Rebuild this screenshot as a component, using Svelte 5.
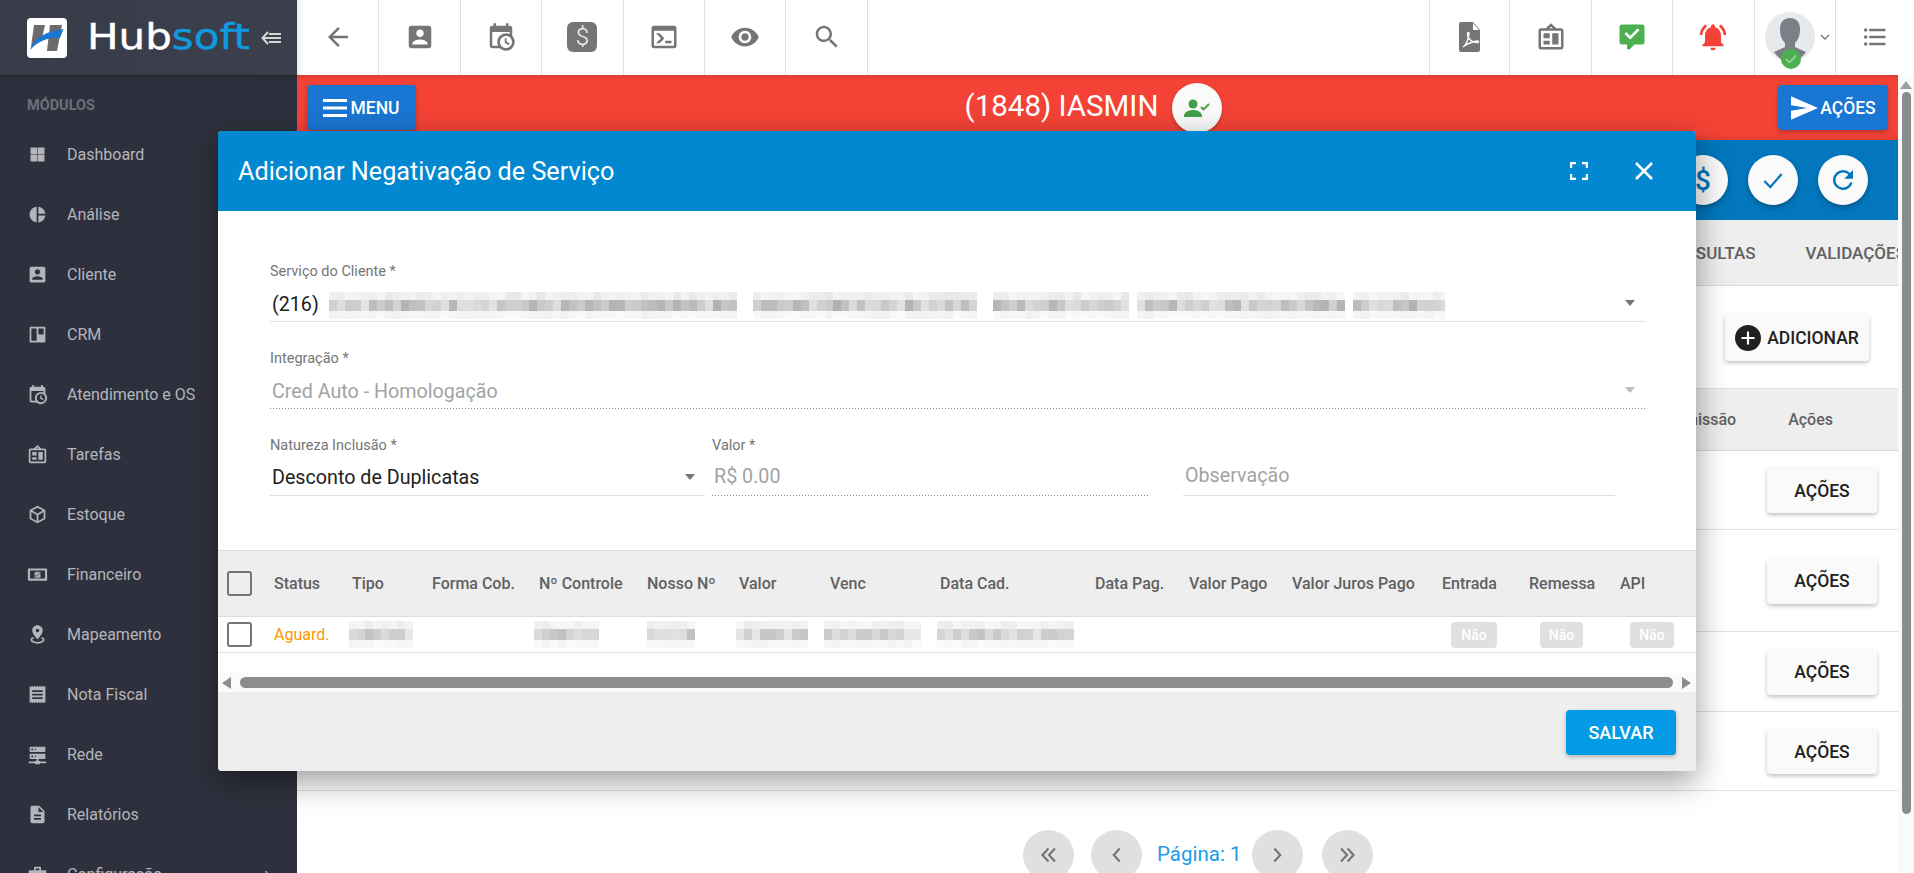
<script>
  const P = {
    account: 'M3 5v14c0 1.1.89 2 2 2h14c1.1 0 2-.9 2-2V5c0-1.1-.9-2-2-2H5c-1.11 0-2 .9-2 2zm12 4c0 1.66-1.34 3-3 3s-3-1.34-3-3 1.34-3 3-3 3 1.34 3 3zm-9 8c0-2 4-3.1 6-3.1s6 1.1 6 3.1v1H6v-1z',
    calendar: 'M15,13H16.5V15.82L18.94,17.23L18.19,18.53L15,16.69V13M19,8H5V19H9.67C9.24,18.09 9,17.07 9,16A7,7 0 0,1 16,9C17.07,9 18.09,9.24 19,9.67V8M5,21C3.89,21 3,20.1 3,19V5C3,3.89 3.89,3 5,3H6V1H8V3H16V1H18V3H19A2,2 0 0,1 21,5V11.1C22.24,12.36 23,14.09 23,16A7,7 0 0,1 16,23C14.09,23 12.36,22.24 11.1,21H5M16,11.15A4.85,4.85 0 0,0 11.15,16C11.15,18.68 13.32,20.85 16,20.85A4.85,4.85 0 0,0 20.85,16C20.85,13.32 18.68,11.15 16,11.15Z',
    console: 'M20,19V7H4V19H20M20,3A2,2 0 0,1 22,5V19A2,2 0 0,1 20,21H4A2,2 0 0,1 2,19V5C2,3.89 2.9,3 4,3H20M13,17V15H18V17H13M9.58,13L5.57,9H8.4L11.7,12.3C12.09,12.69 12.09,13.33 11.7,13.72L8.42,17H5.59L9.58,13Z',
    eye: 'M12 4.5C7 4.5 2.73 7.61 1 12c1.73 4.39 6 7.5 11 7.5s9.27-3.11 11-7.5c-1.73-4.39-6-7.5-11-7.5zM12 17c-2.76 0-5-2.24-5-5s2.24-5 5-5 5 2.24 5 5-2.24 5-5 5zm0-8c-1.66 0-3 1.34-3 3s1.34 3 3 3 3-1.34 3-3-1.34-3-3-3z',
    search: 'M15.5 14h-.79l-.28-.27C15.41 12.59 16 11.11 16 9.5 16 5.91 13.09 3 9.5 3S3 5.91 3 9.5 5.91 16 9.5 16c1.61 0 3.09-.59 4.23-1.57l.27.28v.79l5 4.99L20.49 19l-4.99-5zm-6 0C7.01 14 5 11.99 5 9.5S7.01 5 9.5 5 14 7.01 14 9.5 11.99 14 9.5 14z',
    back: 'M20 11H7.83l5.59-5.59L12 4l-8 8 8 8 1.41-1.41L7.83 13H20v-2z',
    task: 'M12 1l4.2 4H20a2 2 0 0 1 2 2v13a2 2 0 0 1-2 2H4a2 2 0 0 1-2-2V7a2 2 0 0 1 2-2h3.800zM12 3.700L10.600 5h2.800zM4 7v13h16V7zM6 9h5v4H6zM13 9h5v9h-5zM6 15h5v3H6z',
    comment: 'M9,22A1,1 0 0,1 8,21V18H4A2,2 0 0,1 2,16V4C2,2.89 2.9,2 4,2H20A2,2 0 0,1 22,4V16A2,2 0 0,1 20,18H13.9L10.2,21.71C10,21.9 9.75,22 9.5,22V22H9M10.500,14L18,6.500L16.590,5.080L10.500,11.170L7.410,8.090L6,9.500L10.500,14Z',
    bell: 'M7.58 4.08L6.15 2.65C3.75 4.48 2.17 7.3 2.03 10.5h2c.15-2.65 1.51-4.97 3.55-6.42zm12.39 6.42h2c-.15-3.2-1.73-6.02-4.12-7.85l-1.42 1.43c2.02 1.45 3.39 3.77 3.54 6.42zM18 11c0-3.07-1.64-5.64-4.5-6.32V4c0-.83-.67-1.5-1.5-1.5s-1.5.67-1.5 1.5v.68C7.63 5.36 6 7.92 6 11v5l-2 2v1h16v-1l-2-2v-5zm-6 11c.14 0 .27-.01.4-.04.65-.14 1.18-.58 1.44-1.18.1-.24.15-.5.15-.78h-4c.01 1.1.9 2 2.01 2z',
    list: 'M7,5H21V7H7V5M7,13V11H21V13H7M4,4.5A1.5,1.5 0 0,1 5.5,6A1.5,1.5 0 0,1 4,7.5A1.5,1.5 0 0,1 2.5,6A1.5,1.5 0 0,1 4,4.500M4,10.5A1.5,1.5 0 0,1 5.5,12A1.5,1.5 0 0,1 4,13.5A1.5,1.5 0 0,1 2.5,12A1.5,1.5 0 0,1 4,10.500M7,19V17H21V19H7M4,16.5A1.5,1.5 0 0,1 5.5,18A1.5,1.5 0 0,1 4,19.5A1.5,1.5 0 0,1 2.5,18A1.5,1.5 0 0,1 4,16.500Z',
    grid: 'M4 4h7.700v7.700H4zM12.300 4H20v7.700h-7.700zM4 12.300h7.700V20H4zM12.300 12.300H20V20h-7.700z',
    pie: 'M11 3v18c-4.500-.5-8-4.300-8-9s3.500-8.500 8-9zm2 0v8h8c-.47-4.200-3.800-7.530-8-8zm0 10v8c4.200-.47 7.530-3.800 8-8z',
    trello: 'M4,3H20A1,1 0 0,1 21,4V20A1,1 0 0,1 20,21H4A1,1 0 0,1 3,20V4A1,1 0 0,1 4,3M5.5,5A0.5,0.5 0 0,0 5,5.5V18.500A0.5,0.5 0 0,0 5.5,19H10.5A0.5,0.5 0 0,0 11,18.500V5.5A0.5,0.5 0 0,0 10.5,5H5.5M13.5,5A0.5,0.5 0 0,0 13,5.5V11.5A0.5,0.5 0 0,0 13.5,12H18.5A0.5,0.5 0 0,0 19,11.5V5.5A0.5,0.5 0 0,0 18.5,5H13.5Z',
    cube: 'M21,16.5C21,16.88 20.79,17.21 20.47,17.38L12.57,21.82C12.41,21.94 12.21,22 12,22C11.79,22 11.59,21.94 11.43,21.82L3.53,17.38C3.21,17.21 3,16.88 3,16.5V7.5C3,7.12 3.21,6.79 3.53,6.62L11.43,2.18C11.59,2.06 11.79,2 12,2C12.21,2 12.41,2.06 12.57,2.18L20.47,6.62C20.79,6.79 21,7.12 21,7.5V16.5M12,4.15L6.04,7.5L12,10.85L17.96,7.5L12,4.15M5,15.91L11,19.29V12.58L5,9.21V15.91M19,15.91V9.21L13,12.58V19.29L19,15.91Z',
    money: 'M2 5h20a1 1 0 0 1 1 1v12a1 1 0 0 1-1 1H2a1 1 0 0 1-1-1V6a1 1 0 0 1 1-1zM3.500 7.500v9h17v-9zM11 8.500h2v1h2.500v1.500H11.500v.75H14.500a1 1 0 0 1 1 1v1.750a1 1 0 0 1-1 1H13v.5h-2v-.5H8.500V14H13v-.75H9.500a1 1 0 0 1-1-1v-1.750a1 1 0 0 1 1-1H11z',
    pin: 'M18 7.500c0-3.310-2.690-6-6-6S6 4.190 6 7.500c0 4.500 6 10 6 10s6-5.500 6-10zm-8 0c0-1.100.9-2 2-2s2 .9 2 2-.89 2-2 2c-1.100 0-2-.9-2-2zM7 14.800C4.900 15.500 4 16.600 4 18c0 2.700 3.800 4.500 8 4.500s8-1.800 8-4.500c0-1.400-.9-2.500-3-3.200l-1.100 1.500c1.300.4 2.100 1 2.100 1.700 0 1.200-2.800 2.500-6 2.500s-6-1.300-6-2.500c0-.7.8-1.300 2.100-1.700z',
    receipt: 'M18 17H6v-2h12v2zm0-4H6v-2h12v2zm0-4H6V7h12v2zM3 22l1.500-1.500L6 22l1.500-1.500L9 22l1.500-1.500L12 22l1.500-1.500L15 22l1.500-1.500L18 22l1.500-1.500L21 22V2l-1.500 1.500L18 2l-1.500 1.500L15 2l-1.500 1.500L12 2l-1.500 1.500L9 2 7.500 3.500 6 2 4.500 3.500 3 2v20z',
    server: 'M13,19H14A1,1 0 0,1 15,20H22V22H15A1,1 0 0,1 14,23H10A1,1 0 0,1 9,22H2V20H9A1,1 0 0,1 10,19H11V17H4A1,1 0 0,1 3,16V12A1,1 0 0,1 4,11H20A1,1 0 0,1 21,12V16A1,1 0 0,1 20,17H13V19M4,3H20A1,1 0 0,1 21,4V8A1,1 0 0,1 20,9H4A1,1 0 0,1 3,8V4A1,1 0 0,1 4,3M9,7H10V5H9V7M9,15H10V13H9V15M5,5V7H7V5H5M5,13V15H7V13H5Z',
    doc: 'M14 2H6c-1.100 0-1.990.9-1.990 2L4 20c0 1.100.89 2 1.990 2H18c1.100 0 2-.9 2-2V8l-6-6zm2 16H8v-2h8v2zm0-4H8v-2h8v2zm-3-5V3.500L18.500 9H13z',
    tool: 'M9 3h6a1 1 0 0 1 1 1v3h5a1 1 0 0 1 1 1v11a1 1 0 0 1-1 1H3a1 1 0 0 1-1-1V8a1 1 0 0 1 1-1h5V4a1 1 0 0 1 1-1zm1 2v2h4V5z'
  };

  const topLeft = [
    { d: P.back, w: 30 }, { d: P.account, w: 30 }, { d: P.calendar, w: 30 },
    { dollar: true }, { d: P.console, w: 30 }, { d: P.eye, w: 30 }, { d: P.search, w: 30 }
  ];

  const nav = [
    ['Dashboard', P.grid], ['Análise', P.pie], ['Cliente', P.account], ['CRM', P.trello],
    ['Atendimento e OS', P.calendar], ['Tarefas', P.task], ['Estoque', P.cube], ['Financeiro', P.money],
    ['Mapeamento', P.pin], ['Nota Fiscal', P.receipt], ['Rede', P.server], ['Relatórios', P.doc], ['Configuração', P.tool]
  ];

  const heads = ['Status', 'Tipo', 'Forma Cob.', 'Nº Controle', 'Nosso Nº', 'Valor', 'Venc', 'Data Cad.', 'Data Pag.', 'Valor Pago', 'Valor Juros Pago', 'Entrada', 'Remessa', 'API'];

  function blur(width, seed, gaps = [], strength = 1) {
    const cell = 8;
    const rows = [[0, 8, 0.3], [8, 11, 1], [19, 8, 0.18]];
    const out = [];
    let s = seed;
    const rnd = () => { s = (s * 9301 + 49297) % 233280; return s / 233280; };
    for (const [y, h, k] of rows) {
      for (let x = 0; x < width; x += cell) {
        if (gaps.some(([a, b]) => x >= a && x < b)) continue;
        const v = Math.round(255 - (28 + rnd() * 50) * k * strength);
        out.push({ x, y, h, fill: `rgb(${v},${v},${v})` });
      }
    }
    return out;
  }

  const bandGaps = [[408, 424], [648, 664], [800, 808], [1016, 1024]];
  const band = blur(1116, 7, bandGaps);

  const cells = [
    { w: 64, off: -3, seed: 3 }, null,
    { w: 65, off: -5, seed: 11 }, { w: 48, off: 0, seed: 19 }, { w: 72, off: -3, seed: 23 },
    { w: 97, off: -6, seed: 31 }, { w: 137, off: -3, seed: 41 }
  ];

  const rowsBg = ['r1', 'r2', 'r3', 'r4'];
</script>

<div class="app">
  <aside class="sidebar">
    <div class="brand">
      <svg class="logo" viewBox="0 0 40 40" width="40" height="40">
        <rect width="40" height="40" rx="4" fill="#fff" />
        <path d="M7 7h11l-3 13-11 9z" fill="#6b6b6b" />
        <path d="M23 7h12l-5 26H20z" fill="#6b6b6b" />
        <path d="M3 32C8 18 22 13 36.500 11L33 20C24 19 12 22 3 32z" fill="#1976d2" />
      </svg>
      <span class="wordmark">Hub<span>soft</span></span>
      <svg class="collapse" viewBox="0 0 20 14" width="20" height="14" fill="none" stroke="#d6d6d6" stroke-width="2">
        <path d="M7 1L1.500 7 7 13M3 7h17M8 3h12M8 11h12" />
      </svg>
    </div>
    <div class="section">MÓDULOS</div>
    <nav>
      {#each nav as [label, d], i}
        <div class="nav-item">
          <svg viewBox="0 0 24 24" width="21" height="21"><path {d} fill-rule="evenodd" /></svg>
          <span>{label}</span>
          {#if i === nav.length - 1}<em class="chev">›</em>{/if}
        </div>
      {/each}
    </nav>
  </aside>

  <main class="main">
    <header class="topbar">
      {#each topLeft as it}
        <div class="tcell">
          {#if it.dollar}
            <div class="dollar">$</div>
          {:else}
            <svg viewBox="0 0 24 24" width={it.w} height={it.w}><path d={it.d} /></svg>
          {/if}
        </div>
      {/each}
      <div class="spacer"></div>
      <div class="tcell first">
        <svg viewBox="0 0 24 30" width="24" height="30">
          <path d="M3 0h12l7 8v20a2 2 0 0 1-2 2H3a2 2 0 0 1-2-2V2a2 2 0 0 1 2-2z" fill="#757575" />
          <path d="M15 1v7h6z" fill="#fff" />
          <path d="M5 25c3-2 5-7 6-13 .3-2-1.500-2-1.500 0 0 5 5 9 10 8.500 2-.3 1-2-1-1.500-4 .8-9 2.500-13.500 6z" fill="none" stroke="#fff" stroke-width="1.400" />
        </svg>
      </div>
      <div class="tcell">
        <svg viewBox="0 0 24 24" width="30" height="30"><path d={P.task} fill-rule="evenodd" /></svg>
      </div>
      <div class="tcell">
        <svg viewBox="0 0 24 24" width="30" height="30"><path d={P.comment} fill="#4caf50" /></svg>
      </div>
      <div class="tcell">
        <svg viewBox="0 0 24 24" width="32" height="32"><path d={P.bell} fill="#f44336" /></svg>
      </div>
      <div class="tcell user">
        <div class="avatar">
          <svg viewBox="0 0 50 50" width="50" height="50">
            <circle cx="25" cy="25" r="25" fill="#e8e9ed" />
            <path d="M25 6c7 0 10 5 10 11 0 7-2 11-5 14v4l11 5c-4 6-10 10-16 10S13 46 9 40l11-5v-4c-3-3-5-7-5-14 0-6 3-11 10-11z" fill="#7b7f87" />
          </svg>
          <span class="badge">
            <svg viewBox="0 0 20 20" width="20" height="20"><path d="M5 10l3.500 3.500L15 6.500" fill="none" stroke="#a5d6a7" stroke-width="1.500" /></svg>
          </span>
        </div>
        <svg class="down" viewBox="0 0 10 6" width="10" height="6"><path d="M1 1l4 4 4-4" fill="none" stroke="#757575" stroke-width="1.300" /></svg>
      </div>
      <div class="tcell last">
        <svg viewBox="0 0 24 24" width="28" height="28"><path d={P.list} /></svg>
      </div>
    </header>

    <div class="page">
      <div class="content">
        <div class="redbar">
          <button class="bluebtn menu">
            <svg viewBox="0 0 24 18" width="24" height="18"><path d="M0 0h24v3H0zM0 7.500h24v3H0zM0 15h24v3H0z" fill="#fff" /></svg>
            MENU
          </button>
          <div class="title">
            <span>(1848) IASMIN</span>
            <div class="title-ico">
              <svg viewBox="0 0 28 24" width="28" height="24">
                <circle cx="10" cy="8" r="4.500" fill="#43a047" />
                <path d="M1 20c0-4 5-6 9-6s9 2 9 6v1H1z" fill="#43a047" />
                <path d="M18 11l2.500 2.500L26 8" fill="none" stroke="#43a047" stroke-width="1.800" />
              </svg>
            </div>
          </div>
          <button class="bluebtn actions">
            <svg viewBox="0 0 26 26" width="28" height="28"><path d="M1 2l25 11L1 24v-8.500L16 13 1 10.500z" fill="#fff" /></svg>
            AÇÕES
          </button>
        </div>

        <div class="bluebar">
          <div class="round">
            <span class="rdollar">$</span>
          </div>
          <div class="round">
            <svg viewBox="0 0 24 24" width="26" height="26"><path d="M4 13l5.500 5.500L20 6.500" fill="none" stroke="#0277bd" stroke-width="2" /></svg>
          </div>
          <div class="round">
            <svg viewBox="0 0 24 24" width="30" height="30"><path d="M17.650 6.350A7.960 7.960 0 0 0 12 4a8 8 0 1 0 7.730 10h-2.080A6 6 0 1 1 12 6c1.660 0 3.140.69 4.220 1.780L13 11h7V4z" fill="#0277bd" /></svg>
          </div>
        </div>

        <div class="tabs">
          <span>CONSULTAS</span>
          <span>VALIDAÇÕES</span>
        </div>

        <div class="toolbar">
          <button class="add">
            <svg viewBox="0 0 24 24" width="26" height="26"><circle cx="12" cy="12" r="12" fill="#212121" /><path d="M11 6h2v5h5v2h-5v5h-2v-5H6v-2h5z" fill="#fff" /></svg>
            ADICIONAR
          </button>
        </div>

        <div class="bg-head">
          <span class="h-emissao">Emissão</span>
          <span class="h-acoes">Ações</span>
        </div>
        {#each rowsBg as r}
          <div class="bg-row {r}"><button class="light">AÇÕES</button></div>
        {/each}

        <div class="pager">
          <div class="pbtn">
            <svg viewBox="0 0 24 24" width="26" height="26"><path d="M11.500 6L6 12l5.500 6M17.500 6L12 12l5.500 6" fill="none" stroke="#757575" stroke-width="2" /></svg>
          </div>
          <div class="pbtn">
            <svg viewBox="0 0 24 24" width="26" height="26"><path d="M14.500 6L9 12l5.500 6" fill="none" stroke="#757575" stroke-width="2" /></svg>
          </div>
          <span class="plabel">Página: 1</span>
          <div class="pbtn">
            <svg viewBox="0 0 24 24" width="26" height="26"><path d="M9.500 6L15 12l-5.500 6" fill="none" stroke="#757575" stroke-width="2" /></svg>
          </div>
          <div class="pbtn last-p">
            <svg viewBox="0 0 24 24" width="26" height="26"><path d="M6.500 6L12 12l-5.500 6M12.500 6L18 12l-5.500 6" fill="none" stroke="#757575" stroke-width="2" /></svg>
          </div>
        </div>
      </div>
      <div class="vscroll">
        <svg viewBox="0 0 12 8" width="12" height="8"><path d="M6 0l6 8H0z" fill="#9e9e9e" /></svg>
        <div class="vthumb"></div>
      </div>
    </div>
  </main>

  <section class="modal">
    <div class="m-head">
      <h2>Adicionar Negativação de Serviço</h2>
      <svg class="m-full" viewBox="0 0 18 18" width="18" height="18"><path d="M1 6V1h5M12 1h5v5M17 12v5h-5M6 17H1v-5" fill="none" stroke="#fff" stroke-width="2.400" /></svg>
      <svg class="m-close" viewBox="0 0 18 18" width="18" height="18"><path d="M1 1l16 16M17 1L1 17" fill="none" stroke="#fff" stroke-width="2.500" /></svg>
    </div>

    <div class="m-form">
      <div class="field">
        <div class="lab">Serviço do Cliente *</div>
        <div class="ctl solid v1">
          <span class="val dark">(216)</span>
          <svg class="band" width="1116" height="27" shape-rendering="crispEdges">
            {#each band as c}<rect x={c.x} y={c.y} width="8" height={c.h} fill={c.fill} />{/each}
          </svg>
          <i class="arrow"></i>
        </div>
      </div>
      <div class="field">
        <div class="lab">Integração *</div>
        <div class="ctl dotted v2">
          <span class="val">Cred Auto - Homologação</span>
          <i class="arrow pale"></i>
        </div>
      </div>
      <div class="row3">
        <div class="field f-nat">
          <div class="lab">Natureza Inclusão *</div>
          <div class="ctl solid v3">
            <span class="val dark">Desconto de Duplicatas</span>
            <i class="arrow"></i>
          </div>
        </div>
        <div class="field f-val">
          <div class="lab">Valor *</div>
          <div class="ctl dotted v4"><span class="val">R$ 0.00</span></div>
        </div>
        <div class="field f-obs">
          <div class="lab">&nbsp;</div>
          <div class="ctl solid v4"><span class="val">Observação</span></div>
        </div>
      </div>
    </div>

    <div class="t-head tgrid">
      <div class="chkcell"><i class="chk"></i></div>
      {#each heads as h}<div>{h}</div>{/each}
    </div>
    <div class="t-row tgrid">
      <div class="chkcell"><i class="chk"></i></div>
      <div class="aguard">Aguard.</div>
      {#each cells as c}
        <div>
          {#if c}
            <svg class="cellblur" width={c.w} height="27" style="margin-left:{c.off}px" shape-rendering="crispEdges">
              {#each blur(c.w, c.seed, [], 0.8) as b}<rect x={b.x} y={b.y} width="8" height={b.h} fill={b.fill} />{/each}
            </svg>
          {/if}
        </div>
      {/each}
      <div></div><div></div><div></div>
      <div class="nao n1"><span>Não</span></div>
      <div class="nao n2"><span>Não</span></div>
      <div class="nao n3"><span>Não</span></div>
    </div>

    <div class="hscroll">
      <i class="tri left"></i>
      <div class="hthumb"></div>
      <i class="tri right"></i>
    </div>

    <div class="m-foot"><button class="save">SALVAR</button></div>
  </section>
</div>

<style>
  :global(body) { margin: 0; overflow: hidden; background: #fff; }
  * { box-sizing: border-box; }
  button { font-family: inherit; border: 0; cursor: pointer; }

  .app {
    position: relative;
    display: flex;
    width: 1914px;
    height: 873px;
    overflow: hidden;
    font-family: Roboto, "Liberation Sans", sans-serif;
    color: #212121;
  }

  /* Sidebar */
  .sidebar { width: 297px; flex: none; background: #2e313d; overflow: hidden; }
  .brand {
    height: 75px;
    display: flex;
    align-items: center;
    padding-left: 27px;
    background: linear-gradient(90deg, #383c49, #3c404d);
    box-shadow: 0 1px 3px rgba(0, 0, 0, .35);
    position: relative;
  }
  .logo { flex: none; }
  .wordmark {
    display: inline-block;
    margin-left: 20px;
    width: 147px;
    flex: none;
    font: 400 35px "DejaVu Sans", sans-serif;
    color: #fff;
    transform: scaleX(1.2);
    transform-origin: left center;
    line-height: 1;
    white-space: nowrap;
    -webkit-text-stroke: .4px currentColor;
  }
  .wordmark span { color: #0f9be0; }
  .collapse { margin-left: 27px; flex: none; }
  .section {
    padding: 22px 0 0 27px;
    height: 49px;
    font-size: 14.500px;
    font-weight: 700;
    color: #6c6f7a;
  }
  nav { display: flex; flex-direction: column; }
  .nav-item {
    height: 60px;
    display: flex;
    align-items: center;
    padding-left: 27px;
    font-size: 16px;
    color: #b4b5ba;
    position: relative;
  }
  .nav-item svg { fill: #b4b5ba; flex: none; }
  .nav-item span { margin-left: 19px; }
  .chev { position: absolute; left: 264px; font-style: normal; font-size: 20px; }

  /* Main */
  .main { flex: 1; min-width: 0; display: flex; flex-direction: column; }
  .topbar { height: 75px; flex: none; display: flex; padding-left: 1px; background: #fff; box-shadow: inset 6px 0 6px -6px rgba(0,0,0,.2); }
  .tcell {
    width: 81.400px;
    flex: none;
    display: flex;
    align-items: center;
    justify-content: center;
    border-right: 1px solid #e2e2e2;
    padding-bottom: 2px;
  }
  .tcell svg { fill: #757575; }
  .tcell.first { border-left: 1px solid #e2e2e2; }
  .tcell.last { width: 78px; border-right: 0; }
  .spacer { flex: 1; }
  .dollar {
    width: 30px; height: 30px; border-radius: 6px; background: #757575; color: #f5f5f5;
    font: 300 24px/30px Roboto, sans-serif; text-align: center;
  }
  .user { position: relative; gap: 5px; padding-left: 6px; }
  .avatar { position: relative; width: 50px; height: 50px; }
  .avatar svg { display: block; }
  .badge {
    position: absolute; left: 16px; top: 37px; width: 20px; height: 20px; border-radius: 50%;
    background: #4caf50; display: flex;
  }
  .down { flex: none; }

  .page { flex: 1; min-height: 0; display: flex; }
  .content { flex: 1; min-width: 0; overflow: hidden; background: #fff; }
  .vscroll { width: 16px; flex: none; background: #fafafa; display: flex; flex-direction: column; align-items: center; padding-top: 6px; }
  .vthumb { width: 9px; height: 722px; margin-top: 3px; background: #8c8c8c; border-radius: 5px; }

  .redbar {
    height: 65px;
    display: grid;
    grid-template-columns: 1fr auto 1fr;
    align-items: start;
    padding: 10px 10px 0;
    background: linear-gradient(#d93b30 0, #f44336 4px, #f44336 58px, #e53d32 100%);
    color: #fff;
  }
  .bluebtn {
    height: 45px;
    display: inline-flex;
    align-items: center;
    justify-content: center;
    background: #1976d2;
    color: #fff;
    font-size: 17.500px;
    font-weight: 500;
    border-radius: 4px;
    box-shadow: 0 2px 4px rgba(0,0,0,.25);
    padding: 0;
  }
  .menu { width: 109px; gap: 3px; }
  .actions { width: 110px; justify-self: end; gap: 2px; }
  .title { display: flex; align-items: center; gap: 14px; font-size: 29.500px; font-weight: 400; height: 45px; margin: 0 8px 0 0; }
  .title > span { margin-top: -4px; }
  .title-ico {
    width: 50px; height: 50px; border-radius: 50%; background: #fafafa;
    display: flex; align-items: center; justify-content: center;
    box-shadow: 0 2px 4px rgba(0,0,0,.2);
  }

  .bluebar {
    height: 80px;
    background: #0277bd;
    display: flex;
    justify-content: flex-end;
    align-items: center;
    gap: 20px;
    padding-right: 30px;
  }
  .round {
    width: 50px; height: 50px; border-radius: 50%; background: #fafafa;
    display: flex; align-items: center; justify-content: center;
    box-shadow: 0 3px 5px rgba(0,0,0,.25);
  }
  .rdollar { color: #0277bd; font-size: 28px; font-weight: 500; }

  .tabs {
    height: 66px;
    background: #eee;
    border-bottom: 1px solid #d9d9d9;
    display: flex;
    align-items: center;
    gap: 50px;
    padding-left: 1364px;
    font-size: 17px;
    font-weight: 500;
    color: #616161;
    white-space: nowrap;
    overflow: hidden;
  }
  .toolbar { height: 102px; display: flex; justify-content: flex-end; align-items: flex-start; padding: 29px 29px 0 0; }
  .add {
    width: 144px; height: 46px; background: #fafafa; border-radius: 4px;
    display: flex; align-items: center; justify-content: center; gap: 6px;
    font-size: 17.500px; font-weight: 500; color: #212121;
    box-shadow: 0 2px 4px rgba(0,0,0,.25); padding: 0;
  }
  .bg-head {
    height: 63px; background: #eee; border-top: 1px solid #e0e0e0; border-bottom: 1px solid #d9d9d9;
    display: flex; align-items: center; justify-content: flex-end; padding-right: 65px;
    font-size: 16px; font-weight: 500; color: #616161; gap: 52px;
  }
  .bg-row {
    display: flex; align-items: center; justify-content: flex-end; padding: 1px 21px 0 0;
    border-bottom: 1px solid #e0e0e0;
  }
  .r1 { height: 79px; }
  .r2 { height: 102px; }
  .r3 { height: 80px; }
  .r4 { height: 79px; }
  .light {
    width: 110px; height: 45px; background: #fafafa; border-radius: 4px; font-size: 17.500px; font-weight: 500;
    color: #212121; box-shadow: 0 2px 4px rgba(0,0,0,.25); padding: 0;
  }
  .pager { display: flex; align-items: center; padding: 39px 0 0 726px; gap: 17px; }
  .pbtn {
    width: 51px; height: 50px; border-radius: 50%; background: #e0e0e0; flex: none;
    display: flex; align-items: center; justify-content: center;
  }
  .last-p { margin-left: 2px; }
  .plabel { color: #1e9be6; font-size: 20.500px; margin: -2px -7px 0 -2px; white-space: nowrap; }

  /* Modal */
  .modal {
    position: absolute;
    left: 218px;
    top: 131px;
    width: 1478px;
    height: 640px;
    display: flex;
    flex-direction: column;
    background: #fff;
    border-radius: 4px;
    overflow: hidden;
    box-shadow: 0 10px 32px rgba(0,0,0,.4);
  }
  .m-head {
    height: 80px; flex: none; background: #0288d1; color: #fff;
    display: flex; align-items: center; padding-left: 20px;
  }
  .m-head h2 { margin: 0; flex: 1; font-size: 25.200px; font-weight: 400; }
  .m-full { margin-right: 47px; }
  .m-close { margin-right: 43px; }

  .m-form { padding: 53px 51px 0 52px; height: 339px; flex: none; display: flex; flex-direction: column; gap: 29px; }
  .lab { height: 16px; line-height: 16px; font-size: 14.500px; color: #757575; font-weight: 400; }
  .ctl { position: relative; height: 42px; display: flex; align-items: center; padding-left: 2px; }
  .ctl.solid { border-bottom: 1px solid #e0e0e0; }
  .ctl.dotted {
    background: repeating-linear-gradient(90deg, #8f8f8f 0 1px, transparent 1px 3px) left bottom / 100% 1px no-repeat;
  }
  .v1 { padding-top: 7px; }
  .v2 { padding-top: 6px; }
  .v3 { padding-top: 6px; }
  .v4 { padding-top: 2px; }
  .val { font-size: 19.700px; color: #a3a3a3; white-space: nowrap; }
  .val.dark { color: #212121; }
  .band { position: absolute; left: 59px; top: 12px; }
  .arrow {
    position: absolute; right: 10px; top: 20px;
    width: 0; height: 0; border: 5px solid transparent; border-top: 6px solid #757575; border-bottom: 0;
  }
  .arrow.pale { border-top-color: #bdbdbd; }
  .row3 { display: flex; }
  .f-nat { width: 435px; }
  .f-val { width: 438px; margin-left: 7px; }
  .f-obs { width: 432px; margin-left: 33px; }

  .tgrid {
    display: grid;
    grid-template-columns: 56px 78px 80px 107px 108px 92px 91px 110px 155px 94px 103px 150px 87px 91px 78px;
    align-items: center;
    flex: none;
  }
  .t-head {
    height: 67px; background: #eee; border-top: 1px solid #ddd; border-bottom: 1px solid #ddd;
    font-size: 16px; font-weight: 500; color: #616161; white-space: nowrap;
  }
  .chkcell { padding-left: 9px; display: flex; }
  .chk { width: 25px; height: 25px; border: 2px solid #757575; border-radius: 3px; background: transparent; display: block; }
  .t-row { height: 36px; border-bottom: 1px solid #e0e0e0; font-size: 16px; }
  .aguard { color: #ff9800; }
  .cellblur { display: block; }
  .nao span {
    display: block; height: 26px; line-height: 26px; background: #e0e0e0; color: #fff; font-size: 14px; font-weight: 500;
    border-radius: 4px; text-align: center;
  }
  .n1 span { margin-left: 9px; width: 46px; }
  .n2 span { margin-left: 11px; width: 43px; }
  .n3 span { margin-left: 10px; width: 44px; }
  .t-row > .nao:nth-last-child(3) { grid-column: 13; }
  .t-row > .nao:nth-last-child(2) { grid-column: 14; }
  .t-row > .nao:nth-last-child(1) { grid-column: 15; }

  .hscroll {
    flex: none; height: 19px; margin-top: 20px; background: #fafafa;
    display: flex; align-items: center; padding: 0 5px 0 4px; gap: 9px;
  }
  .hthumb { flex: 1; height: 11px; background: #8c8c8c; border-radius: 6px; }
  .tri { width: 0; height: 0; border: 6px solid transparent; }
  .tri.left { border-right: 9px solid #8c8c8c; border-left: 0; }
  .tri.right { border-left: 9px solid #8c8c8c; border-right: 0; }

  .m-foot { flex: 1; background: #eee; display: flex; justify-content: flex-end; align-items: flex-start; padding: 18px 20px 0 0; }
  .save {
    width: 110px; height: 45px; background: #039be5; color: #fff; font-size: 18px; font-weight: 500;
    border-radius: 4px; box-shadow: 0 2px 4px rgba(0,0,0,.25); padding: 0;
  }
</style>
